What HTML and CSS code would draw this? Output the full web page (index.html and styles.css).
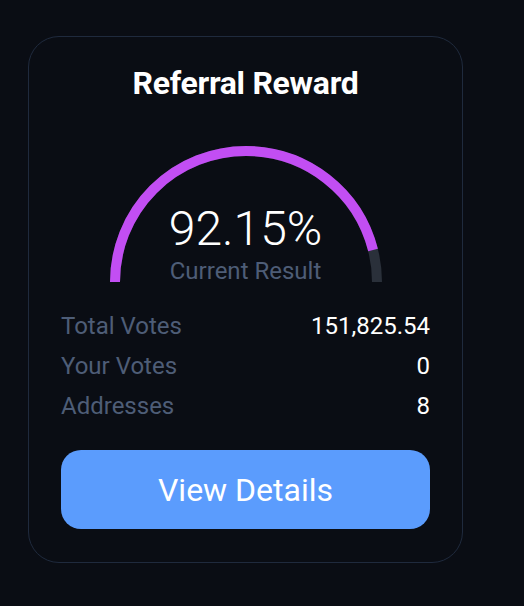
FILE: index.html
```html
<!DOCTYPE html>
<html>
	<head>
		<meta charset="UTF-8">
		<title>Referral Reward</title>
		<link rel="stylesheet" href="styles.css">
	</head>
	<body>
		<div class="card">
			<h2 class="title">Referral Reward</h2>
			<div class="gauge">
				<svg class="arc" width="292" height="146" viewBox="0 0 292 146">
					<!-- track, then the filled part on top -->
					<path d="M15 141 A131 131 0 0 1 277 141" pathLength="100" class="arc-bg"/>
					<path d="M15 141 A131 131 0 0 1 277 141" pathLength="100" class="arc-fill" stroke-dasharray="92.15 100"/>
				</svg>
				<div class="gauge-text">
					<div class="percent">92.15%</div>
					<div class="caption">Current Result</div>
				</div>
			</div>
			<ul class="stats">
				<li><span>Total Votes</span><b>151,825.54</b></li>
				<li><span>Your Votes</span><b>0</b></li>
				<li><span>Addresses</span><b>8</b></li>
			</ul>
			<a href="#" class="btn">View Details</a>
		</div>
	</body>
</html>
```

FILE: styles.css
```css
*{padding:0;margin:0;box-sizing:border-box;}
a{text-decoration:none;}
ul li{list-style:none;}
body{background:#0a0d14;font-family:Roboto,"Liberation Sans",sans-serif;color:#fff;}
.card{width:435px;height:527px;margin:36px 0 0 28px;border:1px solid #1f2a3d;border-radius:31px;padding:28px 32px 0;}
.title{font-size:32px;font-weight:700;text-align:center;line-height:36px;letter-spacing:-0.3px;}
.gauge{position:relative;width:292px;height:146px;margin:40px auto 0;}
.arc{display:block;}
.arc path{fill:none;stroke-width:10;}
.arc-bg{stroke:#2a303a;}
.arc-fill{stroke:#c24ef3;}
.gauge-text{position:absolute;left:0;right:0;bottom:2px;text-align:center;}
.percent{font-size:48px;font-weight:300;line-height:52px;}
.caption{font-size:24px;color:#4e5d77;line-height:28px;margin-top:2px;}
.stats{margin-top:19px;}
.stats li{display:flex;justify-content:space-between;font-size:24px;line-height:40px;}
.stats span{color:#4e5d77;}
.stats b{font-weight:400;}
.btn{display:flex;align-items:center;justify-content:center;height:79px;margin-top:24px;background:#5b9cfd;border-radius:20px;color:#fff;font-size:32px;}
```
